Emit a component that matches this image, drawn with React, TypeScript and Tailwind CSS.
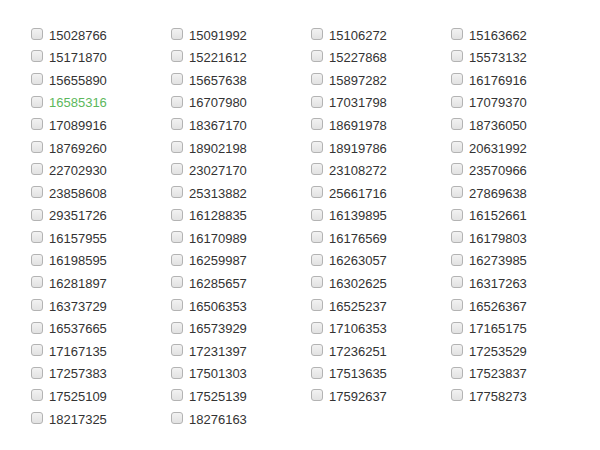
const ids = [
  "15028766", "15091992", "15106272", "15163662",
  "15171870", "15221612", "15227868", "15573132",
  "15655890", "15657638", "15897282", "16176916",
  "16585316", "16707980", "17031798", "17079370",
  "17089916", "18367170", "18691978", "18736050",
  "18769260", "18902198", "18919786", "20631992",
  "22702930", "23027170", "23108272", "23570966",
  "23858608", "25313882", "25661716", "27869638",
  "29351726", "16128835", "16139895", "16152661",
  "16157955", "16170989", "16176569", "16179803",
  "16198595", "16259987", "16263057", "16273985",
  "16281897", "16285657", "16302625", "16317263",
  "16373729", "16506353", "16525237", "16526367",
  "16537665", "16573929", "17106353", "17165175",
  "17167135", "17231397", "17236251", "17253529",
  "17257383", "17501303", "17513635", "17523837",
  "17525109", "17525139", "17592637", "17758273",
  "18217325", "18276163",
];

// the one already picked shows in green
const done = "16585316";

const App = () => {
  return (
    <div className="min-h-[450px] bg-white pl-[31px] pt-[24px] font-['Liberation_Sans',Arial,sans-serif] text-[13px] text-[#333]">
      <div className="grid grid-cols-[repeat(4,140px)]">
        {ids.map((id) => (
          <label key={id} className="flex h-[22.6px] items-center gap-[6px]">
            <span className="h-[12px] w-[12px] shrink-0 rounded-[3px] border border-[#b3b3b3] bg-gradient-to-b from-[#f2f2f2] to-[#e2e2e2] -mt-[3px]" />
            <span className={id === done ? "text-[#5cb85c]" : ""}>{id}</span>
          </label>
        ))}
      </div>
    </div>
  );
};

export default App;
